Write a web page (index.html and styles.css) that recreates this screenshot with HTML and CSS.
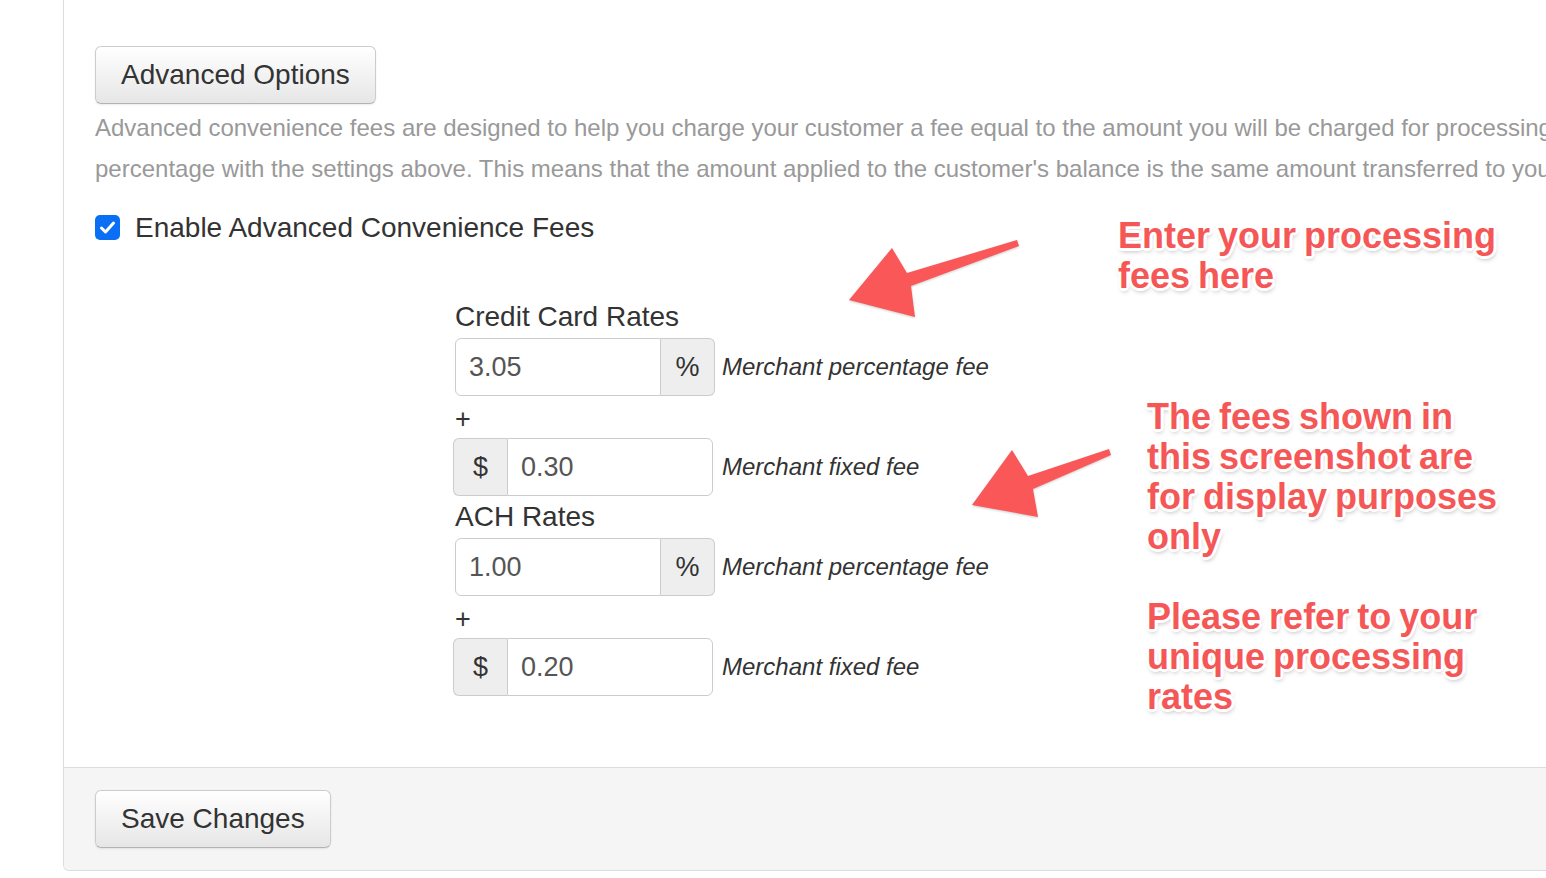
FILE: index.html
```html
<!DOCTYPE html>
<html lang="en">
<head>
    <meta charset="UTF-8">
    <title>Advanced Convenience Fees</title>
    <link rel="stylesheet" href="styles.css">
</head>
<body>
    <div class="panel">
        <div class="panel-body">
            <button class="btn">Advanced Options</button>
            <p class="help">
                <span>Advanced convenience fees are designed to help you charge your customer a fee equal to the amount you will be charged for processing the payment, and replace the fixed fee and</span>
                <span>percentage with the settings above. This means that the amount applied to the customer's balance is the same amount transferred to your account.</span>
            </p>

            <label class="check">
                <span class="check-box">
                    <svg width="25" height="25" viewBox="0 0 25 25"><path d="M6.5 13 L10.5 17 L18.5 8" fill="none" stroke="#fff" stroke-width="3" stroke-linecap="round" stroke-linejoin="round"/></svg>
                </span>
                Enable Advanced Convenience Fees
            </label>

            <div class="rates">
                <div class="rate-title">Credit Card Rates</div>
                <div class="rate-row">
                    <div class="input-group">
                        <span class="field">3.05</span>
                        <span class="addon">%</span>
                    </div>
                    <em class="rate-note">Merchant percentage fee</em>
                </div>
                <div class="plus">+</div>
                <div class="rate-row">
                    <div class="input-group prepend">
                        <span class="addon">$</span>
                        <span class="field">0.30</span>
                    </div>
                    <em class="rate-note">Merchant fixed fee</em>
                </div>

                <div class="rate-title">ACH Rates</div>
                <div class="rate-row">
                    <div class="input-group">
                        <span class="field">1.00</span>
                        <span class="addon">%</span>
                    </div>
                    <em class="rate-note">Merchant percentage fee</em>
                </div>
                <div class="plus">+</div>
                <div class="rate-row">
                    <div class="input-group prepend">
                        <span class="addon">$</span>
                        <span class="field">0.20</span>
                    </div>
                    <em class="rate-note">Merchant fixed fee</em>
                </div>
            </div>
        </div>
        <div class="panel-footer">
            <button class="btn">Save Changes</button>
        </div>
    </div>

    <!-- screenshot annotations -->
    <div class="note note-top">Enter your processing<br>fees here</div>
    <div class="note note-side">The fees shown in<br>this screenshot are<br>for display purposes<br>only<br><br>Please refer to your<br>unique processing<br>rates</div>

    <svg class="arrows" width="1546" height="878" viewBox="0 0 1546 878">
        <polygon points="1017,240 907,273 892,248 849,300 915,317 911,286 1019,246"/>
        <polygon points="1109,449 1028,476 1012,450 972,505 1038,517 1033,489 1111,455"/>
    </svg>
</body>
</html>
```

FILE: styles.css
```css
* {
    margin: 0;
    padding: 0;
    box-sizing: border-box;
}

body {
    background: #fff;
    color: #333;
    font-family: 'Liberation Sans', Arial, sans-serif;
    overflow: hidden;
    position: relative;
    height: 878px;
}

.panel {
    margin-left: 63px;
    width: 1700px;
    border: 1px solid #ddd;
    border-top: none;
    border-radius: 0 0 6px 6px;
}

.panel-body {
    padding: 46px 31px 71px;
}

.btn {
    display: inline-block;
    height: 58px;
    padding: 0 25px;
    font-family: inherit;
    font-size: 28px;
    color: #333;
    background: linear-gradient(to bottom, #fff, #e6e6e6);
    border: 1px solid #ccc;
    border-bottom-color: #b3b3b3;
    border-radius: 6px;
    box-shadow: inset 0 1px 0 rgba(255,255,255,.2), 0 1px 2px rgba(0,0,0,.08);
}

.help {
    margin-top: 3px;
    font-size: 24px;
    line-height: 41px;
    color: #999;
}

.help span {
    display: block;
    white-space: nowrap;
}

.check {
    display: flex;
    align-items: center;
    gap: 15px;
    margin-top: 18px;
    font-size: 28px;
    line-height: 41px;
}

.check-box {
    width: 25px;
    height: 25px;
    border-radius: 5px;
    background: #0b6ff5;
    display: flex;
}

.rates {
    margin-top: 48px;
    padding-left: 360px;
}

.rate-title {
    font-size: 28px;
    line-height: 42px;
}

.rate-row {
    display: flex;
    align-items: center;
    gap: 7px;
}

.input-group {
    display: flex;
    width: 260px;
    height: 58px;
    font-size: 27px;
}

.input-group.prepend {
    margin-left: -2px;
    margin-right: 2px;
}

.field {
    flex: 1;
    display: flex;
    align-items: center;
    padding-left: 13px;
    color: #555;
    border: 1px solid #ccc;
    border-radius: 6px 0 0 6px;
}

.addon {
    width: 54px;
    display: flex;
    align-items: center;
    justify-content: center;
    background: #eee;
    border: 1px solid #ccc;
    border-left: none;
    border-radius: 0 6px 6px 0;
}

.prepend .addon {
    border-left: 1px solid #ccc;
    border-right: none;
    border-radius: 6px 0 0 6px;
}

.prepend .field {
    border-radius: 0 6px 6px 0;
}

.rate-note {
    font-size: 24px;
    color: #333;
}

.plus {
    font-size: 27px;
    line-height: 38px;
    padding-top: 4px;
}

.panel-footer {
    padding: 22px 31px;
    background: #f5f5f5;
    border-top: 1px solid #ddd;
    border-radius: 0 0 6px 6px;
}

.note {
    position: absolute;
    font-weight: bold;
    font-size: 36px;
    line-height: 40px;
    word-spacing: -2px;
    color: #f55757;
    text-shadow:
        3px 0 0 #fff, -3px 0 0 #fff, 0 3px 0 #fff, 0 -3px 0 #fff,
        2px 2px 0 #fff, -2px -2px 0 #fff, 2px -2px 0 #fff, -2px 2px 0 #fff,
        1px 3px 5px rgba(0,0,0,.35);
}

.note-top {
    left: 1118px;
    top: 216px;
}

.note-side {
    left: 1147px;
    top: 397px;
}

.arrows {
    position: absolute;
    left: 0;
    top: 0;
    pointer-events: none;
}

.arrows polygon {
    fill: #fa5858;
    filter: drop-shadow(0 1px 1px rgba(0,0,0,.2));
}
```
